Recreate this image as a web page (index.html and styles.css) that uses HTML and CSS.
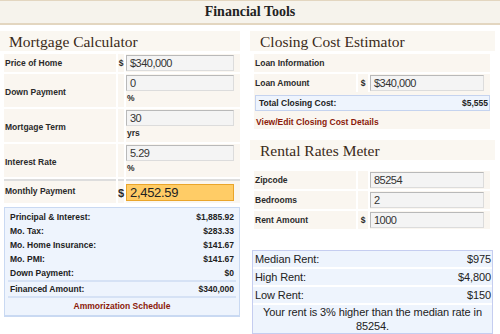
FILE: index.html
```html
<html>
<head>
  <link rel="stylesheet" href="styles.css">
</head>
<body>
  <div class="topbar">Financial Tools</div>
  <div class="page">
    <div class="col left">
      <h2 class="heading">Mortgage Calculator</h2>
      <div class="form">
        <div class="cell label">Price of Home</div>
        <div class="cell sign">$</div>
        <div class="cell field"><div class="input">$340,000</div></div>

        <div class="cell label tall">Down Payment</div>
        <div class="cell sign"></div>
        <div class="cell field"><div class="input">0</div><div class="unit">%</div></div>

        <div class="cell label tall">Mortgage Term</div>
        <div class="cell sign"></div>
        <div class="cell field"><div class="input">30</div><div class="unit">yrs</div></div>

        <div class="cell label tall">Interest Rate</div>
        <div class="cell sign"></div>
        <div class="cell field"><div class="input">5.29</div><div class="unit">%</div></div>

        <div class="cell label total">Monthly Payment</div>
        <div class="cell sign total big">$</div>
        <div class="cell field total"><div class="input payment">2,452.59</div></div>
      </div>
      <div class="summary">
        <div class="line"><span>Principal &amp; Interest:</span><span>$1,885.92</span></div>
        <div class="line"><span>Mo. Tax:</span><span>$283.33</span></div>
        <div class="line"><span>Mo. Home Insurance:</span><span>$141.67</span></div>
        <div class="line"><span>Mo. PMI:</span><span>$141.67</span></div>
        <div class="line"><span>Down Payment:</span><span>$0</span></div>
        <div class="line financed"><span>Financed Amount:</span><span>$340,000</span></div>
        <div class="link center">Ammorization Schedule</div>
      </div>
    </div>

    <div class="col right">
      <h2 class="heading">Closing Cost Estimator</h2>
      <div class="closing">
        <div class="form wide">
          <div class="cell label span3">Loan Information</div>
          <div class="cell label">Loan Amount</div>
          <div class="cell sign">$</div>
          <div class="cell field"><div class="input">$340,000</div></div>
        </div>
        <div class="costbox"><span>Total Closing Cost:</span><span>$5,555</span></div>
        <div class="link">View/Edit Closing Cost Details</div>
      </div>

      <h2 class="heading rental">Rental Rates Meter</h2>
      <div class="form wide rent">
        <div class="cell label">Zipcode</div>
        <div class="cell sign"></div>
        <div class="cell field"><div class="input">85254</div></div>
        <div class="cell label">Bedrooms</div>
        <div class="cell sign"></div>
        <div class="cell field"><div class="input">2</div></div>
        <div class="cell label">Rent Amount</div>
        <div class="cell sign">$</div>
        <div class="cell field"><div class="input">1000</div></div>
      </div>

      <div class="rates">
        <div class="rate"><span>Median Rent:</span><span>$975</span></div>
        <div class="rate"><span>High Rent:</span><span>$4,800</span></div>
        <div class="rate"><span>Low Rent:</span><span>$150</span></div>
        <div class="rate note">Your rent is 3% higher than the median rate in 85254.</div>
      </div>
    </div>
  </div>
</body>
</html>
```

FILE: styles.css
```css
body {
  margin: 0;
  padding: 0;
  background: #fff;
  font-family: "Liberation Sans", Arial, sans-serif;
  color: #222;
}

.topbar {
  height: 22px;
  line-height: 22px;
  background: #f6f3ec;
  border-top: 1px solid #e3d6c0;
  border-bottom: 2px solid #e3d6c0;
  text-align: center;
  font-family: "Liberation Serif", Georgia, serif;
  font-weight: bold;
  font-size: 14px;
  color: #222;
}

.page {
  display: flex;
  gap: 10px;
}

.col.left {
  width: 240px;
}

.col.right {
  width: 245px;
}

.heading {
  margin: 6px 0 3px 0;
  padding: 0 0 0 9px;
  height: 20px;
  line-height: 21px;
  background: #faf7f1;
  font-family: "Liberation Serif", Georgia, serif;
  font-weight: normal;
  font-size: 15.5px;
  color: #3a2a18;
}

.right .heading {
  padding-left: 10px;
}

.form {
  display: grid;
  grid-template-columns: 112px 6px 114px;
  gap: 2px;
  padding-left: 4px;
}

.form.wide {
  grid-template-columns: 102px 10px 120px;
}

.cell {
  background: #faf6f0;
  font-size: 8.5px;
  font-weight: bold;
  color: #2a2a2a;
}

.label {
  display: flex;
  align-items: center;
  min-height: 18px;
  padding-left: 1px;
}

.label.tall {
  padding-top: 2px;
}

.span3 {
  grid-column: 1 / 4;
}

.sign {
  display: flex;
  align-items: center;
  justify-content: center;
}

.sign.big {
  font-size: 11px;
}

.field {
  padding: 1px 0 1px 0;
}

.input {
  width: 103px;
  height: 14px;
  padding: 0 0 0 3px;
  line-height: 15px;
  background: #f4f4f4;
  border: 1px solid #b9b9b9;
  border-right-color: #dcdcdc;
  border-bottom-color: #dcdcdc;
  font-size: 11px;
  font-weight: normal;
  letter-spacing: -0.5px;
  color: #333;
}

.wide .input {
  width: 109px;
}

.unit {
  height: 15px;
  line-height: 15px;
  padding-left: 1px;
  font-size: 8.5px;
}

.total {
  border-top: 2px solid #ddd;
  padding-top: 3px;
  padding-bottom: 2px;
}

.label.total {
  padding-top: 0;
}

.input.payment {
  height: 15px;
  line-height: 16px;
  background: #ffcc66;
  border: 1px solid #eaa52a;
  font-size: 13px;
  letter-spacing: -0.3px;
  color: #222;
}

.summary {
  margin: 4px 0 0 4px;
  padding: 2px 3px 1px 3px;
  background: #eef4fd;
  border: 1px solid #c9d9f2;
  border-bottom-width: 2px;
}

.line {
  display: flex;
  justify-content: space-between;
  height: 14px;
  line-height: 14px;
  padding: 0 2px;
  font-size: 8.5px;
  font-weight: bold;
}

.line.financed {
  border-top: 2px solid #d6e2f5;
  border-bottom: 2px solid #d6e2f5;
}

.link {
  font-size: 8.5px;
  font-weight: bold;
  color: #8b1a0a;
}

.link.center {
  height: 16px;
  line-height: 16px;
  text-align: center;
}

.closing {
  margin-left: 4px;
  width: 236px;
  padding-bottom: 1px;
  background: #faf6f0;
}

.closing .form {
  padding-left: 0;
  background: #fff;
}

.costbox {
  display: flex;
  justify-content: space-between;
  margin: 3px 0 0 1px;
  height: 14px;
  line-height: 14px;
  padding: 0 1px 0 3px;
  background: #eef4fd;
  border: 1px solid #c5d3ef;
  font-size: 8.5px;
  font-weight: bold;
}

.closing .link {
  padding: 5px 0 0 2px;
  height: 12px;
  line-height: 12px;
}

.heading.rental {
  margin-top: 11px;
  margin-bottom: 11px;
}

.rates {
  margin: 21px 0 0 2px;
  width: 239px;
  background: #eef4fd;
  border: 1px solid #c5cdf0;
  font-size: 11px;
  letter-spacing: -0.1px;
  color: #222;
}

.rate {
  display: flex;
  justify-content: space-between;
  height: 16px;
  line-height: 16px;
  padding: 0 1px 0 2px;
  border-bottom: 2px solid #fff;
}

.rate.note {
  display: block;
  height: auto;
  line-height: 14px;
  padding: 0 4px;
  text-align: center;
  border-bottom: none;
}
```
